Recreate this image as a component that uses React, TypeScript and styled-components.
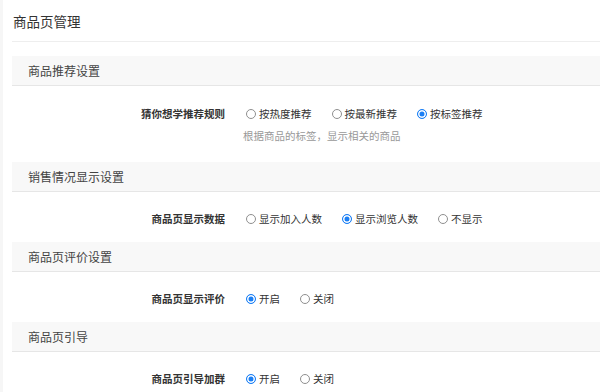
import React, { useState } from "react";
import styled, { createGlobalStyle } from "styled-components";

const GlobalStyle = createGlobalStyle`
  html, body {
    margin: 0;
    padding: 0;
    background: #f6f6f6;
  }
  body {
    font-family: "Noto Sans CJK SC", "Noto Sans", sans-serif;
    color: #333;
  }
`;

const Page = styled.div`
  margin-left: 3px;
  min-height: 392px;
  background: #fff;
  padding-left: 9px;
  box-sizing: border-box;
  overflow: hidden;
`;

const Title = styled.h1`
  margin: 0 0 14px;
  height: 42px;
  padding-left: 1px;
  display: flex;
  align-items: center;
  font-size: 13.5px;
  font-weight: 400;
  color: #333;
  border-bottom: 1px solid #eeeeee;
  box-sizing: border-box;
  padding-top: 1px;
`;

const SectionHeader = styled.div`
  height: 30px;
  display: flex;
  align-items: center;
  padding-left: 16px;
  background: #f8f8f8;
  border-bottom: 1px solid #e6e6e6;
  box-sizing: border-box;
  font-size: 12px;
  color: #444;
`;

const SectionBody = styled.div<{ $extra?: boolean }>`
  padding: ${(p) => (p.$extra ? "20px 0 18px" : "19px 0 15px")};
`;

const Row = styled.div`
  display: grid;
  grid-template-columns: 213px 1fr;
  column-gap: 18px;
  align-items: center;
`;

const Label = styled.div`
  text-align: right;
  font-size: 10.5px;
  line-height: 16px;
  font-weight: 700;
  color: #333;
`;

const Options = styled.div`
  display: flex;
  align-items: center;
  height: 16px;
`;

const Option = styled.label`
  display: flex;
  align-items: center;
  margin-right: 17px;
  font-size: 10.5px;
  line-height: 16px;
  color: #333;
  cursor: pointer;
`;

const Dot = styled.span<{ $on: boolean }>`
  width: 10px;
  height: 10px;
  margin: 0 3px 0 3px;
  border-radius: 50%;
  box-sizing: border-box;
  border: 1px solid ${(p) => (p.$on ? "#1a7ff5" : "#8f8f8f")};
  background: ${(p) => (p.$on ? "#1a7ff5" : "#fff")};
  box-shadow: ${(p) => (p.$on ? "inset 0 0 0 1.5px #fff" : "none")};
  flex-shrink: 0;
`;

const Helper = styled.div`
  grid-column: 2;
  margin-top: 6px;
  font-size: 10.5px;
  line-height: 16px;
  color: #999;
`;

interface RadioRowProps {
  label: string;
  options: string[];
  initial: number;
  helper?: string;
}

const RadioRow: React.FC<RadioRowProps> = ({ label, options, initial, helper }) => {
  const [value, setValue] = useState(initial);

  return (
    <Row>
      <Label>{label}</Label>
      <Options>
        {options.map((opt, i) => (
          <Option key={opt} onClick={() => setValue(i)}>
            <Dot $on={value === i} />
            {opt}
          </Option>
        ))}
      </Options>
      {helper && <Helper>{helper}</Helper>}
    </Row>
  );
};

const sections = [
  {
    title: "商品推荐设置",
    label: "猜你想学推荐规则",
    options: ["按热度推荐", "按最新推荐", "按标签推荐"],
    initial: 2,
    helper: "根据商品的标签，显示相关的商品",
  },
  {
    title: "销售情况显示设置",
    label: "商品页显示数据",
    options: ["显示加入人数", "显示浏览人数", "不显示"],
    initial: 1,
  },
  {
    title: "商品页评价设置",
    label: "商品页显示评价",
    options: ["开启", "关闭"],
    initial: 0,
  },
  {
    title: "商品页引导",
    label: "商品页引导加群",
    options: ["开启", "关闭"],
    initial: 0,
  },
];

const App: React.FC = () => {
  return (
    <>
      <GlobalStyle />
      <Page>
        <Title>商品页管理</Title>
        {sections.map((s) => (
          <section key={s.title}>
            <SectionHeader>{s.title}</SectionHeader>
            <SectionBody $extra={!!s.helper}>
              <RadioRow
                label={s.label}
                options={s.options}
                initial={s.initial}
                helper={s.helper}
              />
            </SectionBody>
          </section>
        ))}
      </Page>
    </>
  );
};

export default App;
